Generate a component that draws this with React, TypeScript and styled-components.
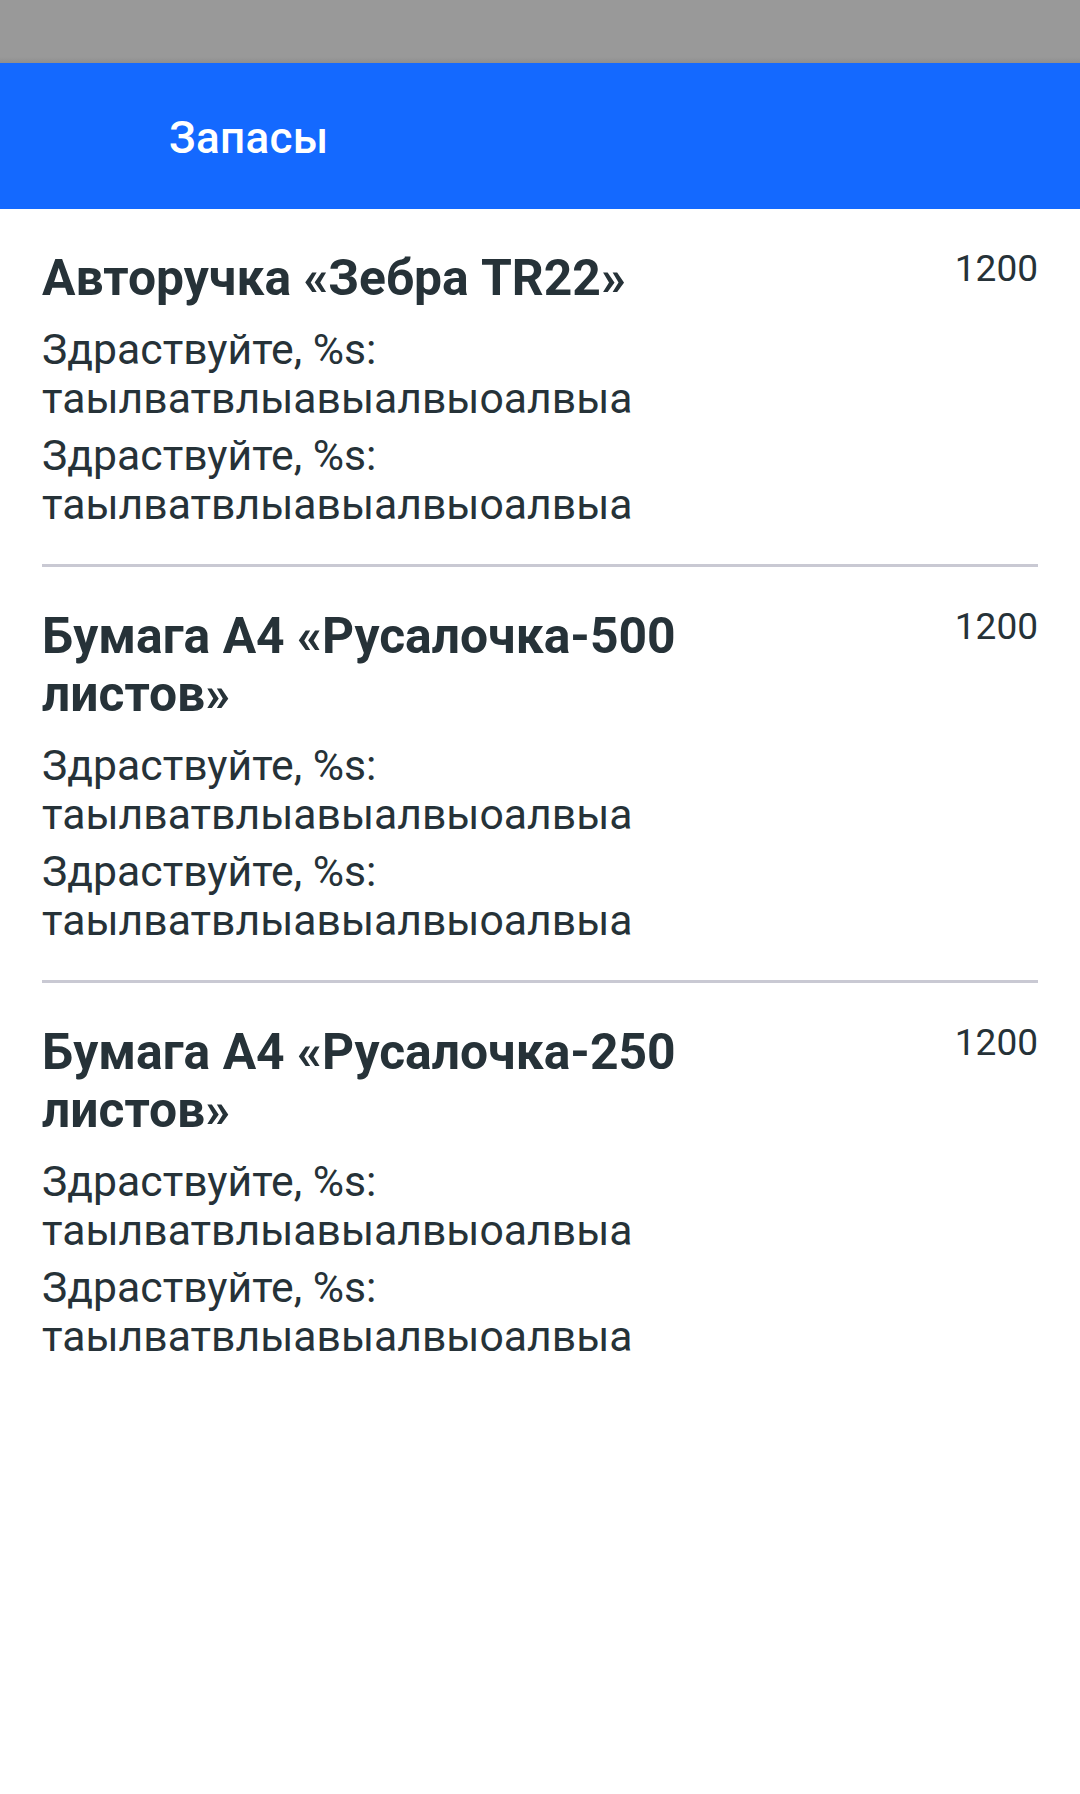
import React from "react";
import styled, { createGlobalStyle } from "styled-components";

const GlobalStyle = createGlobalStyle`
  html, body {
    margin: 0;
    padding: 0;
    background: #ffffff;
  }
  body {
    font-family: Roboto, "Noto Sans", "Liberation Sans", sans-serif;
    -webkit-font-smoothing: antialiased;
  }
`;

const Screen = styled.div`
  width: 1080px;
  min-height: 1794px;
  background: #ffffff;
  display: flex;
  flex-direction: column;
`;

const StatusBar = styled.div`
  height: 63px;
  background: linear-gradient(to bottom, #999999 0px, #999999 57px, #8e8e8e 63px);
`;

const AppBar = styled.header`
  height: 146px;
  background: #1469ff;
  display: flex;
  align-items: center;
  padding-left: 169px;
  padding-top: 4px;
  box-sizing: border-box;
`;

const AppTitle = styled.h1`
  margin: 0;
  font-family: Roboto, sans-serif;
  font-weight: 500;
  font-size: 44px;
  line-height: 52px;
  color: #ffffff;
  letter-spacing: 0.3px;
`;

const List = styled.main`
  display: flex;
  flex-direction: column;
  padding: 0 42px;
`;

const Item = styled.section<{ $last?: boolean }>`
  display: flex;
  align-items: flex-start;
  justify-content: space-between;
  padding: 40px 0 35px;
  border-bottom: ${(p) => (p.$last ? "none" : "3px solid #c9c9d3")};
`;

const TextColumn = styled.div`
  display: flex;
  flex-direction: column;
  width: 700px;
`;

const ItemTitle = styled.h2`
  margin: 0 0 18px;
  font-family: Roboto, sans-serif;
  font-weight: 700;
  font-size: 49.8px;
  line-height: 58px;
  color: #263238;
`;

const Description = styled.p`
  margin: 0;
  font-family: Roboto, sans-serif;
  font-weight: 400;
  font-size: 42.7px;
  line-height: 49px;
  color: #263238;
  & + & {
    margin-top: 8px;
  }
`;

const Quantity = styled.div`
  font-family: Roboto, sans-serif;
  font-weight: 400;
  font-size: 37px;
  line-height: 39px;
  color: #263238;
`;

const items = [
  { title: "Авторучка «Зебра TR22»", qty: 1200 },
  { title: "Бумага А4 «Русалочка-500 листов»", qty: 1200 },
  { title: "Бумага А4 «Русалочка-250 листов»", qty: 1200 },
];

const desc = ["Здраствуйте, %s: таылватвлыавыалвыоалвыа", "Здраствуйте, %s: таылватвлыавыалвыоалвыа"];

export default function App() {
  return (
    <Screen>
      <GlobalStyle />
      <StatusBar />
      <AppBar>
        <AppTitle>Запасы</AppTitle>
      </AppBar>
      <List>
        {items.map((it, i) => (
          <Item key={i} $last={i === items.length - 1}>
            <TextColumn>
              <ItemTitle>{it.title}</ItemTitle>
              {desc.map((d, j) => (
                <Description key={j}>{d}</Description>
              ))}
            </TextColumn>
            <Quantity>{it.qty}</Quantity>
          </Item>
        ))}
      </List>
    </Screen>
  );
}
